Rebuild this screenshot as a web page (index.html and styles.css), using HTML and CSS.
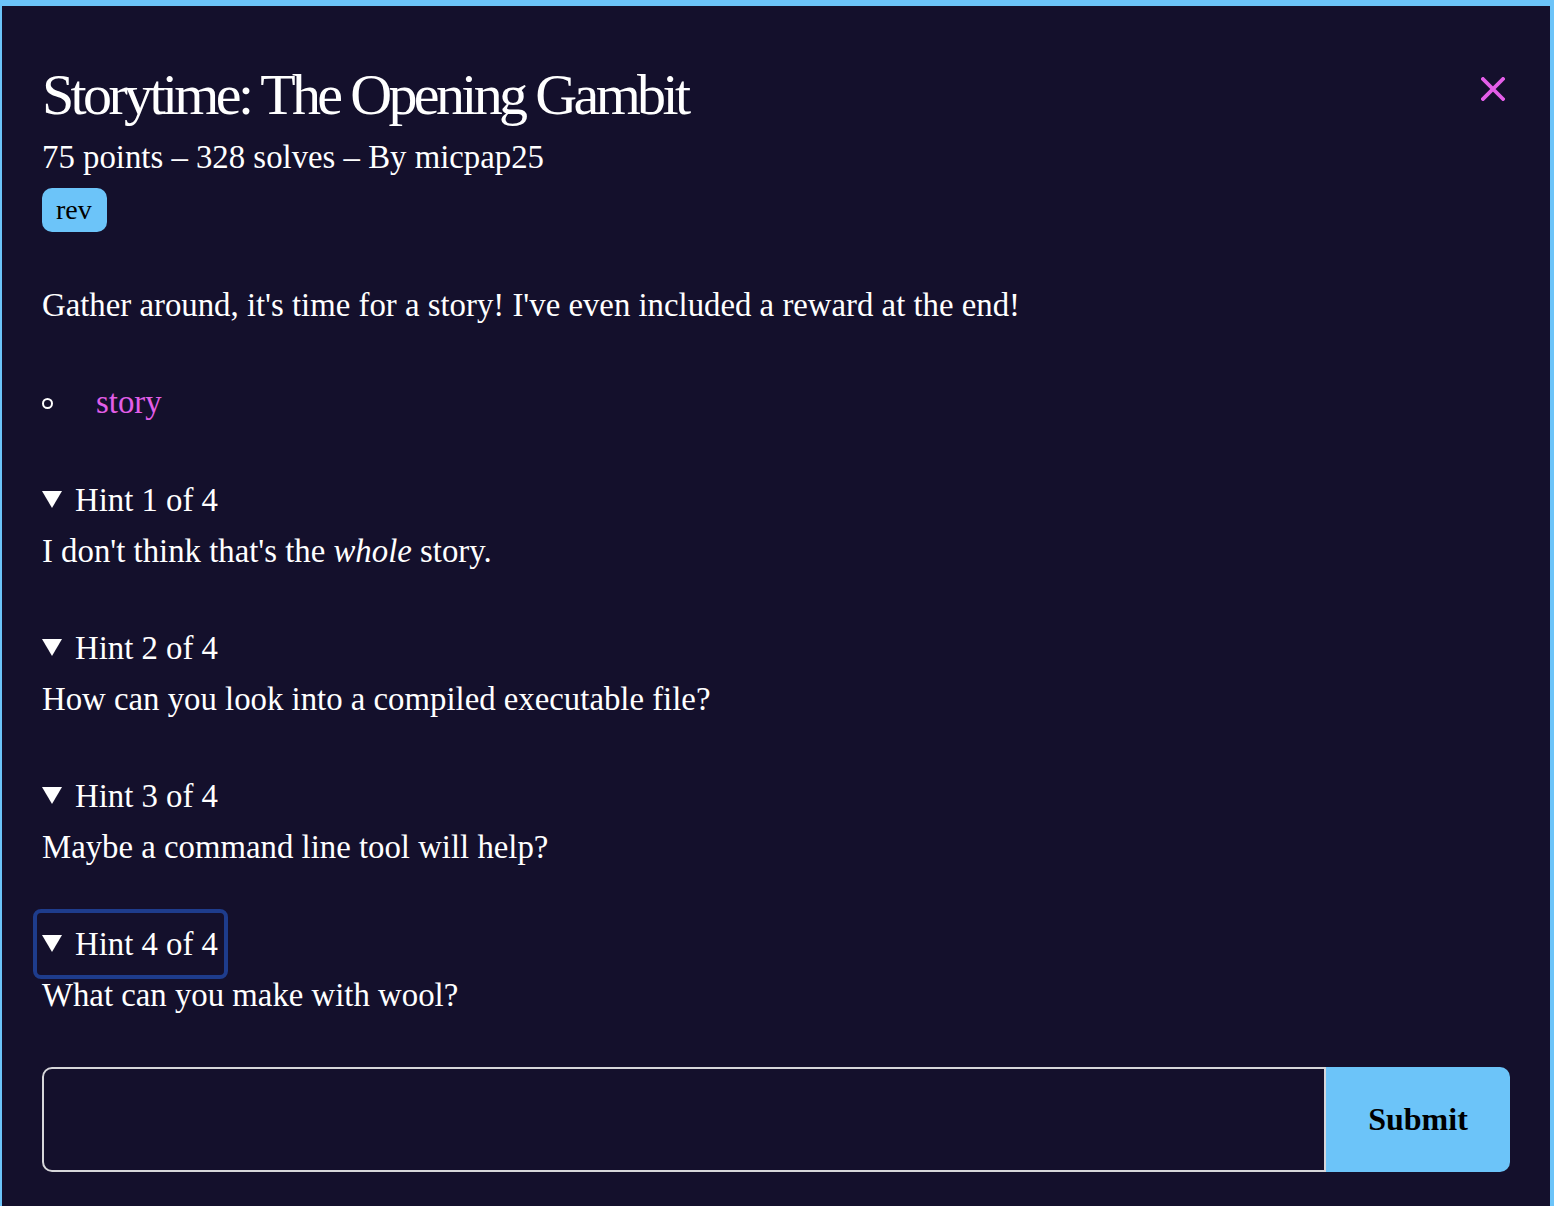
FILE: index.html
```html
<!DOCTYPE html>
<html lang="en">
<head>
<meta charset="utf-8">
<title>Storytime: The Opening Gambit</title>
<link rel="stylesheet" href="styles.css">
</head>
<body>
<div class="dialog">
  <header class="head">
    <div class="head-main">
      <h1 class="title">Storytime: The Opening Gambit</h1>
      <p class="meta">75 points – 328 solves – By micpap25</p>
      <span class="tag">rev</span>
    </div>
    <button class="close" type="button" aria-label="Close">
      <svg width="24" height="24" viewBox="0 0 24 24"><path d="M2 2 L22 22 M22 2 L2 22" stroke="#e35ee8" stroke-width="3.8" stroke-linecap="square" fill="none"/></svg>
    </button>
  </header>
  <p class="desc">Gather around, it's time for a story! I've even included a reward at the end!</p>
  <ul class="files"><li class="file"><a href="#" class="file-link">story</a></li></ul>
  <details class="hint" open>
    <summary class="hint-sum"><span class="tri"></span>Hint 1 of 4</summary>
    <div class="hint-text">I don't think that's the <em>whole</em> story.</div>
  </details>
  <details class="hint" open>
    <summary class="hint-sum"><span class="tri"></span>Hint 2 of 4</summary>
    <div class="hint-text">How can you look into a compiled executable file?</div>
  </details>
  <details class="hint" open>
    <summary class="hint-sum"><span class="tri"></span>Hint 3 of 4</summary>
    <div class="hint-text">Maybe a command line tool will help?</div>
  </details>
  <details class="hint" open>
    <summary class="hint-sum focused"><span class="tri"></span>Hint 4 of 4</summary>
    <div class="hint-text">What can you make with wool?</div>
  </details>
  <form class="flag">
    <input class="flag-input" type="text" aria-label="Flag">
    <button class="flag-submit" type="button">Submit</button>
  </form>
</div>
</body>
</html>
```
FILE: styles.css
```css
html, body {
  margin: 0;
  padding: 0;
  background: #14102c;
}
body {
  font-family: "Liberation Serif", "Times New Roman", serif;
  color: #ffffff;
  font-size: 32.8px;
  overflow: hidden;
}
.dialog {
  min-height: 1400px;
  background: #14102c;
  border-top: 6px solid #6cc4f9;
  border-left: 2px solid #6cc4f9;
  border-right: 4px solid #6cc4f9;
  padding: 0 40px;
}
.head {
  display: flex;
  justify-content: space-between;
  align-items: flex-start;
}
.title {
  margin: 60px 0 0;
  font-size: 58px;
  line-height: 58px;
  font-weight: normal;
  letter-spacing: -3.65px;
}
.meta {
  margin: 13px 0 0;
  line-height: 40px;
}
.tag {
  display: inline-block;
  margin-top: 11px;
  background: #6cc4f9;
  color: #000;
  font-size: 28px;
  line-height: 32px;
  padding: 6px 15px 6px 14px;
  border-radius: 10px;
}
.close {
  margin-top: 66px;
  width: 34px;
  height: 34px;
  padding: 0;
  border: 0;
  background: transparent;
  display: flex;
  align-items: center;
  justify-content: center;
}
.desc {
  margin: 53px 0 0;
  line-height: 40px;
}
.files {
  margin: 57px 0 0;
  padding: 0;
  list-style: none;
  line-height: 40px;
}
.file {
  display: flex;
  align-items: center;
}
.file::before {
  content: "";
  width: 7px;
  height: 7px;
  border: 2px solid #ffffff;
  border-radius: 50%;
  margin-left: 0;
  margin-right: 43px;
  margin-top: 2px;
}
.file-link {
  color: #e35ee8;
  text-decoration: none;
}
.hint {
  margin: 0;
}
.files + .hint {
  margin-top: 47px;
}
.hint + .hint {
  margin-top: 46px;
}
.hint-sum {
  display: flex;
  align-items: center;
  width: fit-content;
  list-style: none;
  margin-left: -5px;
  padding: 11px 6px 11px 5px;
  line-height: 40px;
  border-radius: 4px;
}
.hint-sum::-webkit-details-marker {
  display: none;
}
.tri {
  width: 0;
  height: 0;
  border-left: 10.5px solid transparent;
  border-right: 10.5px solid transparent;
  border-top: 17px solid #ffffff;
  margin-right: 13px;
  margin-top: -2px;
}
.focused {
  outline: 4px solid #1e3c8c;
}
.hint-text {
  line-height: 40px;
  margin-top: 0;
}
.flag {
  display: flex;
  margin-top: 52px;
}
.flag-input {
  flex: 1;
  height: 105px;
  box-sizing: border-box;
  border: 2px solid #d6d6da;
  border-radius: 10px 0 0 10px;
  background: transparent;
  color: #fff;
  font: inherit;
  padding: 0 16px;
  margin: 0;
}
.flag-submit {
  width: 184px;
  height: 105px;
  border: 0;
  border-radius: 0 10px 10px 0;
  background: #6cc4f9;
  color: #000;
  font-family: "Liberation Serif", "Times New Roman", serif;
  font-weight: bold;
  font-size: 32px;
  margin: 0;
}
```
